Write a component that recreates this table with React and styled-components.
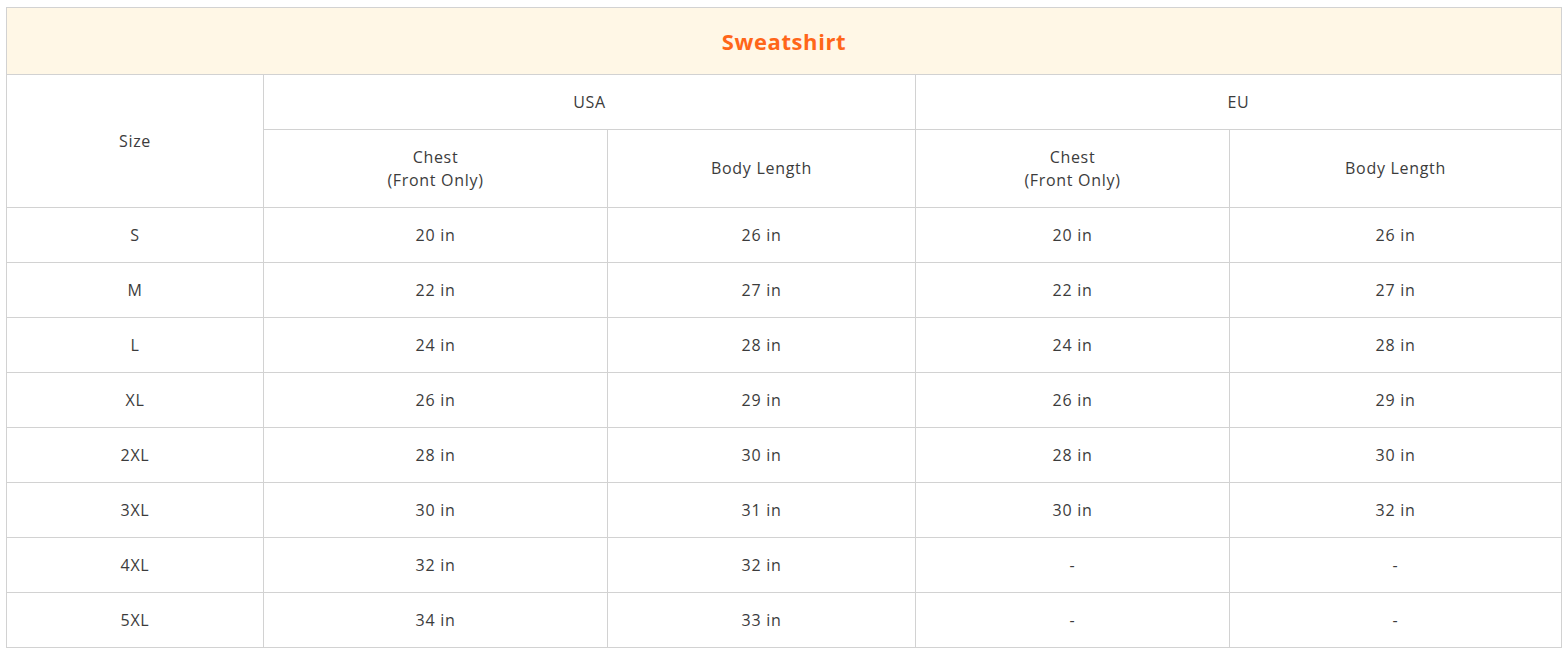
import styled, { createGlobalStyle } from 'styled-components';

const GlobalStyle = createGlobalStyle`
  body {
    margin: 0;
    background: #fff;
    font-family: 'Open Sans', 'Liberation Sans', sans-serif;
  }
`;

const sizes = [
  ['S', '20 in', '26 in', '20 in', '26 in'],
  ['M', '22 in', '27 in', '22 in', '27 in'],
  ['L', '24 in', '28 in', '24 in', '28 in'],
  ['XL', '26 in', '29 in', '26 in', '29 in'],
  ['2XL', '28 in', '30 in', '28 in', '30 in'],
  ['3XL', '30 in', '31 in', '30 in', '32 in'],
  ['4XL', '32 in', '32 in', '-', '-'],
  ['5XL', '34 in', '33 in', '-', '-'],
];

export default function App() {
  return (
    <Page>
      <GlobalStyle />
      <SizeTable>
        <colgroup>
          <col style={{ width: 257 }} />
          <col style={{ width: 344 }} />
          <col style={{ width: 308 }} />
          <col style={{ width: 314 }} />
          <col style={{ width: 332 }} />
        </colgroup>
        <thead>
          <tr>
            <TitleCell colSpan={5}>Sweatshirt</TitleCell>
          </tr>
          <Row $height={55}>
            <Cell rowSpan={2}>Size</Cell>
            <Cell colSpan={2}>USA</Cell>
            <Cell colSpan={2}>EU</Cell>
          </Row>
          <Row $height={78}>
            <Cell>Chest<br />(Front Only)</Cell>
            <Cell>Body Length</Cell>
            <Cell>Chest<br />(Front Only)</Cell>
            <Cell>Body Length</Cell>
          </Row>
        </thead>
        <tbody>
          {sizes.map((row) => (
            <Row key={row[0]} $height={55}>
              {row.map((v, i) => (
                <Cell key={i}>{v}</Cell>
              ))}
            </Row>
          ))}
        </tbody>
      </SizeTable>
    </Page>
  );
}

const Page = styled.div`
  padding: 7px 4px 0 6px;
`;

const SizeTable = styled.table`
  width: 1555px;
  table-layout: fixed;
  border-collapse: collapse;
`;

const TitleCell = styled.th`
  height: 66px;
  padding: 0;
  background: #fff7e6;
  border: 1px solid #d2d2d2;
  color: #ff6619;
  font-size: 22px;
  font-weight: 700;
  letter-spacing: 0.6px;
  text-align: center;
  vertical-align: middle;
`;

const Row = styled.tr`
  height: ${(props) => props.$height}px;
`;

const Cell = styled.td`
  box-sizing: border-box;
  padding: 0;
  border: 1px solid #d2d2d2;
  color: #3c3c3c;
  font-size: 16px;
  font-weight: 400;
  line-height: 23px;
  letter-spacing: 0.7px;
  text-align: center;
  vertical-align: middle;
`;
